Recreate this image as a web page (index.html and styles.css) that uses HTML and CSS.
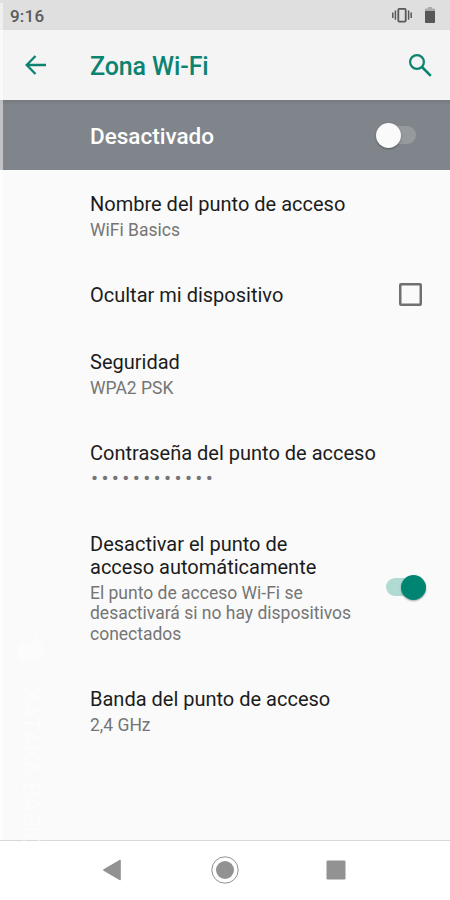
FILE: index.html
```html
<!DOCTYPE html>
<html lang="es">
<head>
<meta charset="utf-8">
<title>Zona Wi-Fi</title>
<link rel="stylesheet" href="styles.css">
</head>
<body>
<div class="screen">
  <header class="status">
    <span class="clock">9:16</span>
    <div class="status-icons">
      <svg width="20" height="16" viewBox="0 0 20 16"><rect x="6.3" y="1.8" width="7.4" height="12.8" rx="1" fill="none" stroke="#585858" stroke-width="1.8"/><path d="M.8 5.5v5.4M3.4 3.6v9.2M16.6 3.6v9.2M19.2 5.5v5.4" stroke="#585858" stroke-width="1.5"/></svg>
      <svg width="10" height="16" viewBox="0 0 10 16"><path d="M0 4V2.2Q0 1.5.8 1.5H3V0h4v1.5h2.2q.8 0 .8.7V4z" fill="#ababab"/><path d="M0 4h10v11q0 1-.8 1H.8Q0 16 0 15z" fill="#585858"/></svg>
    </div>
  </header>
  <div class="toolbar">
    <svg class="back" width="22" height="20" viewBox="0 0 22 20" fill="none" stroke="#0b8370" stroke-width="2.3"><path d="M21 10H1.8M10.5 1 1.7 10l8.8 9"/></svg>
    <h1>Zona Wi-Fi</h1>
    <svg class="search" width="23" height="23" viewBox="0 0 23 23" fill="none" stroke="#0b8370" stroke-width="2.2"><circle cx="8" cy="8" r="6.9"/><path d="m13 13 8.8 8.8" stroke-width="2.6"/></svg>
  </div>
  <div class="master">
    <span>Desactivado</span>
    <div class="switch off"><i></i></div>
  </div>
  <main class="list">
    <section class="item">
      <div class="copy"><h2>Nombre del punto de acceso</h2><p>WiFi Basics</p></div>
    </section>
    <section class="item single">
      <div class="copy"><h2>Ocultar mi dispositivo</h2></div>
      <div class="check"></div>
    </section>
    <section class="item">
      <div class="copy"><h2>Seguridad</h2><p>WPA2 PSK</p></div>
    </section>
    <section class="item">
      <div class="copy"><h2>Contraseña del punto de acceso</h2><p class="password">••••••••••••</p></div>
    </section>
    <section class="item tall">
      <div class="copy"><h2>Desactivar el punto de<br>acceso automáticamente</h2><p>El punto de acceso Wi-Fi se<br>desactivará si no hay dispositivos<br>conectados</p></div>
      <div class="switch on"><i></i></div>
    </section>
    <section class="item">
      <div class="copy"><h2>Banda del punto de acceso</h2><p>2,4 GHz</p></div>
    </section>
  </main>
  <nav class="nav">
    <svg width="18" height="22" viewBox="0 0 18 22"><path d="M.6 10.3 16.8.8q1-.5 1 .6v19.2q0 1.1-1 .6L.6 11.7Q-.4 11 .6 10.3z" fill="#929292"/></svg>
    <svg width="28" height="28" viewBox="0 0 28 28"><circle cx="14" cy="14" r="13.2" fill="none" stroke="#929292"/><circle cx="14" cy="14" r="9" fill="#929292"/></svg>
    <svg width="20" height="20" viewBox="0 0 20 20"><rect x=".5" y=".5" width="19" height="19" rx="1.2" fill="#929292"/></svg>
  </nav>
  <div class="edge"></div>
  <div class="watermark">
    <svg width="28" height="38" viewBox="0 0 28 38" fill="#fff"><path d="M18 0q2 7 6 11 5 7 1 14-5 7-12 4-9 3-12-6-2-8 3-13 6-3 10 3 5-5 4-13z"/></svg>
    <span>XATAKA BASIC</span>
  </div>
</div>
</body>
</html>
```
FILE: styles.css
```css
* { box-sizing: border-box; margin: 0; }
body { font-family: Roboto, "Liberation Sans", sans-serif; }
svg { display: block; flex: none; }

.screen {
  position: relative;
  display: flex;
  flex-direction: column;
  width: 450px;
  height: 900px;
  overflow: hidden;
  background: #fafafa;
}

.status {
  display: flex;
  justify-content: space-between;
  align-items: center;
  height: 30px;
  padding: 0 15px 0 10px;
  background: #dfdfdf;
}
.clock { font-size: 17px; font-weight: 500; letter-spacing: .2px; color: #5a5a5a; padding-top: 1px; }
.status-icons { display: flex; gap: 13px; align-items: center; }

.toolbar {
  display: flex;
  align-items: center;
  height: 70px;
  padding: 0 18px 0 25px;
  background: #f4f4f4;
}
.toolbar h1 {
  flex: 1;
  margin-left: 43px;
  padding-top: 3px;
  font-size: 25px;
  font-weight: 500;
  line-height: 30px;
  letter-spacing: -.1px;
  color: #0b8370;
}

.master {
  display: flex;
  align-items: center;
  justify-content: space-between;
  height: 70px;
  padding: 0 34px 0 90px;
  background: linear-gradient(#767a7f, #80858b 5px);
  color: #fff;
  font-size: 22.5px;
  font-weight: 500;
}
.master span { padding-top: 1px; }

.switch {
  display: flex;
  align-items: center;
  width: 40px;
  height: 18px;
  border-radius: 9px;
}
.switch i {
  width: 25px;
  height: 25px;
  flex: none;
  border-radius: 50%;
  box-shadow: 0 1px 2px rgba(0, 0, 0, .35);
}
.off { background: linear-gradient(90deg, transparent 12px, #969a9d 12px); }
.off i { background: #fafafa; }
.on { justify-content: flex-end; margin-bottom: 3px; background: #b1dad3; }
.on i { background: #008573; }

.list { flex: 1; padding-top: 1px; }
.item {
  display: flex;
  align-items: center;
  justify-content: space-between;
  height: 91px;
  padding: 0 24px 0 90px;
}
.item.single { height: 67px; padding-right: 28px; }
.item.tall { height: 155px; }
.copy { white-space: nowrap; }
.item h2 {
  font-size: 20px;
  font-weight: 400;
  line-height: 23.5px;
  color: #1c1c1c;
}
.item p {
  margin-top: 3px;
  font-size: 17.5px;
  line-height: 20.4px;
  color: #757575;
}
.item .password { margin-top: 2.6px; padding-left: 1px; font-size: 21px; letter-spacing: 3.35px; }
.check {
  width: 23px;
  height: 23px;
  margin-bottom: 2px;
  border: 2px solid #707070;
  border-radius: 2px;
  box-shadow: inset 0 0 0 .5px #707070;
}

.nav {
  display: flex;
  align-items: center;
  height: 60px;
  padding: 0 0 2px 103px;
  border-top: 1px solid #d8d8d8;
  background: #fff;
}
.nav svg + svg { margin-left: 90px; }
.nav svg + svg + svg { margin-left: 87px; }

.edge {
  position: absolute;
  left: 0;
  top: 3px;
  width: 3px;
  height: 837px;
  background: rgba(255, 255, 255, .5);
}
.watermark {
  position: absolute;
  left: 17px;
  top: 632px;
  height: 210px;
  width: 28px;
  overflow: hidden;
  color: #fff;
  opacity: .5;
}
.watermark span {
  display: block;
  width: 28px;
  margin-top: 17px;
  writing-mode: vertical-rl;
  font-size: 24px;
  line-height: 28px;
  white-space: nowrap;
}
```
